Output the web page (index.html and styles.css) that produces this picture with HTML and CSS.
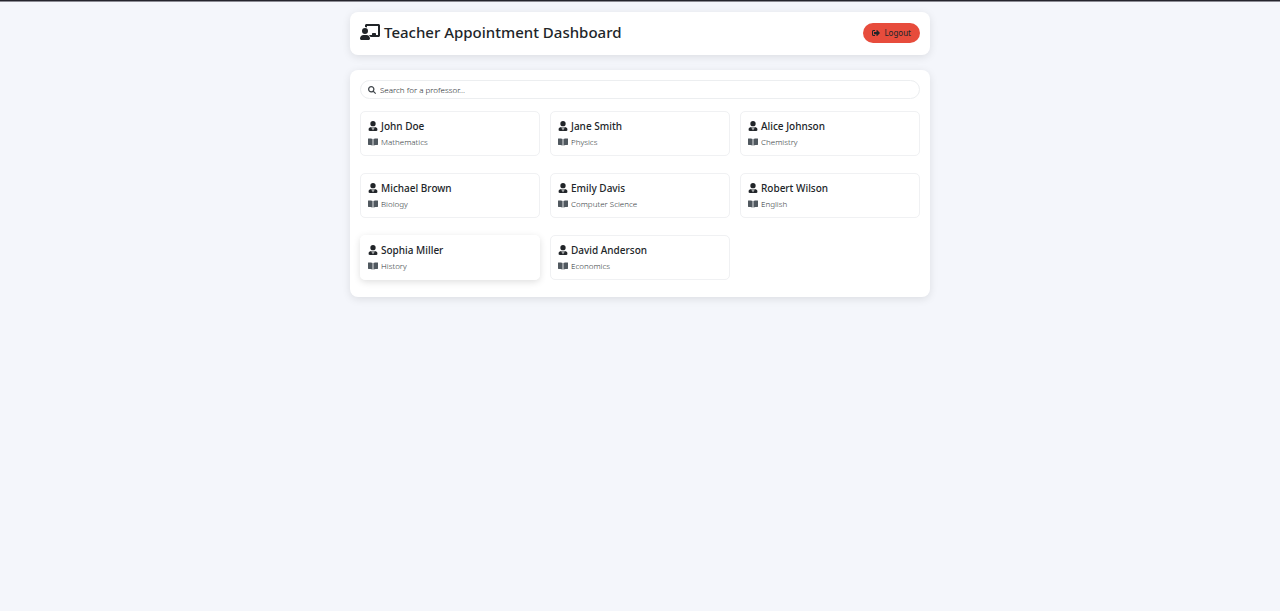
FILE: index.html
```html
<!DOCTYPE html>
<html lang="en">
<head>
<meta charset="utf-8">
<meta name="viewport" content="width=device-width, initial-scale=1">
<title>Teacher Appointment Dashboard</title>
<link rel="stylesheet" href="styles.css">
</head>
<body>
<svg class="sprite" aria-hidden="true">
  <symbol id="tie" viewBox="0 0 448 512"><path d="M224 272A136 136 0 1 0 224 0a136 136 0 1 0 0 272zM300 310l-40 170l-18-100l22-56h-80l22 56l-18 100l-40-170C56 310 0 360 0 422v42c0 27 22 48 48 48h352c27 0 48-21 48-48v-42c0-62-56-112-148-112z"/></symbol>
  <symbol id="book" viewBox="0 0 576 512"><path d="M264 90C220 66 128 60 30 60C12 60 0 70 0 86v318c0 16 13 28 30 28c90 2 160 6 217 28c8 4 17-1 17-9zM312 90c44-24 136-30 234-30c18 0 30 10 30 26v318c0 16-13 28-30 28c-90 2-160 6-217 28c-8 4-17-1-17-9z"/></symbol>
  <symbol id="teacher" viewBox="0 0 640 512"><path d="M160 48c0-27 22-48 48-48h384c26 0 48 22 48 48v320c0 27-22 48-48 48H337c-12-26-30-48-53-64h100v-32c0-18 14-32 32-32h64c18 0 32 14 32 32v32h64V64H224v49c-19-11-41-17-64-17zM160 128a96 96 0 1 1 0 192a96 96 0 1 1 0-192zM112 352h96c62 0 112 50 112 112c0 27-21 48-48 48H48c-27 0-48-21-48-48c0-62 50-112 112-112z"/></symbol>
  <symbol id="search" viewBox="0 0 512 512"><path fill-rule="evenodd" d="M416 208c0 46-15 88-40 119l125 125c12 12 12 30 0 42l-7 7c-12 12-30 12-42 0L327 376c-33 25-75 40-119 40C93 416 0 323 0 208S93 0 208 0s208 93 208 208zM208 336a128 128 0 1 0 0-256a128 128 0 1 0 0 256z"/></symbol>
  <symbol id="exit" viewBox="0 0 512 512"><path d="M497 273L329 441c-15 15-41 5-41-17v-96H152c-13 0-24-11-24-24v-96c0-13 11-24 24-24h136V88c0-21 26-32 41-17l168 168c9 9 9 25 0 34zM192 436v-40c0-7-5-12-12-12H96c-18 0-32-14-32-32V160c0-18 14-32 32-32h84c7 0 12-5 12-12V76c0-7-5-12-12-12H96c-53 0-96 43-96 96v192c0 53 43 96 96 96h84c7 0 12-5 12-12z"/></symbol>
</svg>
<div class="page">
  <header class="panel header">
    <h1 class="title"><svg class="title-icon" aria-hidden="true"><use href="#teacher"/></svg>Teacher Appointment Dashboard</h1>
    <button class="logout" type="button"><svg class="small-icon" aria-hidden="true"><use href="#exit"/></svg>Logout</button>
  </header>
  <main class="panel">
    <label class="search">
      <svg class="small-icon" aria-hidden="true"><use href="#search"/></svg>
      <input class="search-input" type="text" placeholder="Search for a professor..." aria-label="Search for a professor">
    </label>
    <div class="grid">
      <article class="card"><h2 class="name"><svg class="card-icon" aria-hidden="true"><use href="#tie"/></svg>John Doe</h2><p class="subject"><svg class="card-icon" aria-hidden="true"><use href="#book"/></svg>Mathematics</p></article>
      <article class="card"><h2 class="name"><svg class="card-icon" aria-hidden="true"><use href="#tie"/></svg>Jane Smith</h2><p class="subject"><svg class="card-icon" aria-hidden="true"><use href="#book"/></svg>Physics</p></article>
      <article class="card"><h2 class="name"><svg class="card-icon" aria-hidden="true"><use href="#tie"/></svg>Alice Johnson</h2><p class="subject"><svg class="card-icon" aria-hidden="true"><use href="#book"/></svg>Chemistry</p></article>
      <article class="card"><h2 class="name"><svg class="card-icon" aria-hidden="true"><use href="#tie"/></svg>Michael Brown</h2><p class="subject"><svg class="card-icon" aria-hidden="true"><use href="#book"/></svg>Biology</p></article>
      <article class="card"><h2 class="name"><svg class="card-icon" aria-hidden="true"><use href="#tie"/></svg>Emily Davis</h2><p class="subject"><svg class="card-icon" aria-hidden="true"><use href="#book"/></svg>Computer Science</p></article>
      <article class="card"><h2 class="name"><svg class="card-icon" aria-hidden="true"><use href="#tie"/></svg>Robert Wilson</h2><p class="subject"><svg class="card-icon" aria-hidden="true"><use href="#book"/></svg>English</p></article>
      <article class="card card-raised"><h2 class="name"><svg class="card-icon" aria-hidden="true"><use href="#tie"/></svg>Sophia Miller</h2><p class="subject"><svg class="card-icon" aria-hidden="true"><use href="#book"/></svg>History</p></article>
      <article class="card"><h2 class="name"><svg class="card-icon" aria-hidden="true"><use href="#tie"/></svg>David Anderson</h2><p class="subject"><svg class="card-icon" aria-hidden="true"><use href="#book"/></svg>Economics</p></article>
    </div>
  </main>
</div>
</body>
</html>
```
FILE: styles.css
```css
* { box-sizing: border-box; }
body {
  margin: 0;
  min-height: 100vh;
  border-top: 1px solid #25252d;
  background: #f4f6fb;
  box-shadow: inset 0 1px #8b8b93;
  color: #212529;
  font-family: "Segoe UI", "Noto Sans", sans-serif;
}
svg { fill: currentColor; flex: none; }
.sprite { position: absolute; width: 0; height: 0; }
.page {
  max-width: 600px;
  margin: 0 auto;
  padding: 11px 10px;
  display: flex;
  flex-direction: column;
  gap: 15px;
}
.panel {
  padding: 10px 10px 17px;
  border-radius: 8px;
  background: #fff;
  box-shadow: 0 2px 8px rgba(0, 0, 0, 0.1);
}
.header {
  display: flex;
  justify-content: space-between;
  align-items: flex-start;
  padding: 11px 10px 12px;
}
.title {
  display: flex;
  align-items: center;
  gap: 4px;
  margin: 0;
  font-size: 15px;
  line-height: 18px;
  font-weight: 500;
}
.title-icon { width: 20px; height: 16px; }
.small-icon { width: 8px; height: 8px; }
.logout {
  display: flex;
  align-items: center;
  gap: 4px;
  padding: 0 9px;
  border: 0;
  border-radius: 10px;
  background: #e74c3c;
  color: #212529;
  font-family: inherit;
  font-size: 8px;
  line-height: 20px;
}
.search {
  display: flex;
  align-items: center;
  gap: 4px;
  padding: 0 7px;
  height: 19px;
  border: 1px solid #eceef0;
  border-radius: 10px;
  color: #40464b;
}
.search-input {
  flex: 1;
  min-width: 0;
  padding: 0;
  border: 0;
  outline: 0;
  background: transparent;
  font-family: inherit;
  font-size: 8px;
  font-weight: 300;
  line-height: 16px;
}
.search-input::placeholder { color: #212529; opacity: 1; }
.grid {
  display: grid;
  grid-template-columns: repeat(3, 1fr);
  gap: 17px 10px;
  margin-top: 12px;
}
.card {
  padding: 7px;
  border: 1px solid #f0f1f3;
  border-radius: 5px;
}
.card-raised { border-color: #fff; box-shadow: 0 2px 7px rgba(0, 0, 0, 0.13); }
.card-icon { width: 10px; height: 10px; }
.name, .subject { display: flex; align-items: center; gap: 3px; margin: 0; }
.name { font-size: 10px; line-height: 14px; font-weight: 500; }
.subject { margin-top: 3px; color: #343a40; font-size: 8px; font-weight: 300; line-height: 12px; }
.subject .card-icon { color: #50585f; }
```
